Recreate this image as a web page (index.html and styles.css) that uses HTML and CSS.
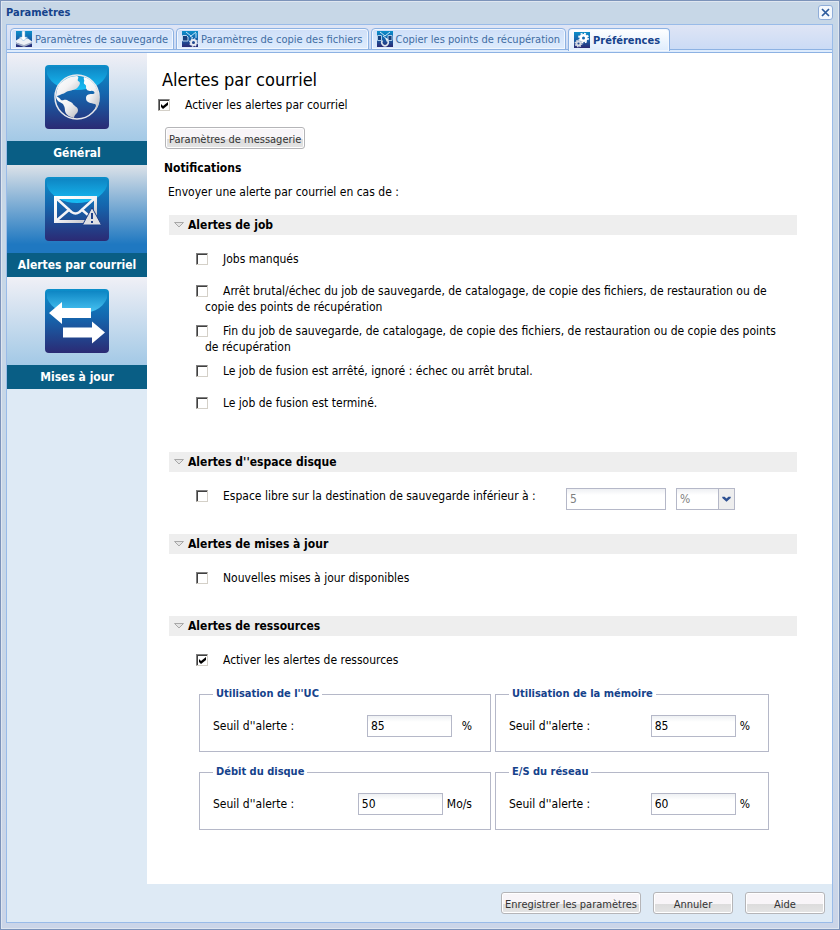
FILE: index.html
```html
<!DOCTYPE html>
<html lang="fr">
<head>
    <meta charset="UTF-8">
    <meta name="viewport" content="width=device-width, initial-scale=1.0">
    <title>Paramètres</title>
    <link rel="stylesheet" href="styles.css">
</head>
<body>

<!-- Shared gradients -->
<svg class="defs" width="0" height="0" aria-hidden="true">
    <defs>
        <linearGradient id="tile" x1="0" y1="0" x2="0" y2="1">
            <stop offset="0" stop-color="#0c8fca"/>
            <stop offset="0.45" stop-color="#1565ad"/>
            <stop offset="1" stop-color="#2b2a74"/>
        </linearGradient>
        <linearGradient id="gloss" x1="0" y1="0" x2="0" y2="1">
            <stop offset="0" stop-color="#0e86c4"/>
            <stop offset="1" stop-color="#18bdf5"/>
        </linearGradient>
        <linearGradient id="glossLight" x1="0" y1="0" x2="0" y2="1">
            <stop offset="0" stop-color="#0e86c4"/>
            <stop offset="1" stop-color="#4cc8f6"/>
        </linearGradient>
        <linearGradient id="metal" x1="0" y1="0" x2="1" y2="1">
            <stop offset="0" stop-color="#ffffff"/>
            <stop offset="0.5" stop-color="#f2f2f4"/>
            <stop offset="1" stop-color="#b9bac0"/>
        </linearGradient>
    </defs>
</svg>

<div class="window">
    <header class="titlebar">
        <span>Paramètres</span>
        <button class="close" type="button" aria-label="Fermer">
            <svg width="9" height="9" viewBox="0 0 9 9"><path d="M1 1l7 7M8 1l-7 7" stroke="#2c5a9c" stroke-width="1.7"/></svg>
        </button>
    </header>

    <div class="panel">
        <nav class="tabs">
            <button class="tab" type="button">
                <svg width="16" height="16" viewBox="0 0 16 16">
                    <rect width="16" height="16" fill="url(#tile)"/>
                    <path d="M0 9.500L4 7l8 .5 4 3v1.500L8 15 0 11.500z" fill="#eef1f6"/>
                    <path d="M0 11.500l8 2.500 8-3v1.500L8 16l-8-3z" fill="#a3aec6"/>
                    <path d="M6 0h3v6h2.500L7.500 10 3.500 6H6z" fill="#fff" stroke="#6fa6d6" stroke-width=".5"/>
                </svg>
                Paramètres de sauvegarde
            </button>
            <button class="tab" type="button">
                <svg width="16" height="16" viewBox="0 0 16 16">
                    <rect width="16" height="16" fill="url(#tile)"/>
                    <path d="M.5 4.500h4L6 6v4H.5z" fill="#173f7c" stroke="#b9d4ee"/>
                    <path d="M4 1l5 4 5-4M8 5l3 2M14 2v5" fill="none" stroke="#bfe4f8"/>
                    <circle cx="11.500" cy="11.500" r="2.500" fill="none" stroke="#e8ebf2" stroke-width="2"/>
                    <circle cx="11.500" cy="11.500" r="3.800" fill="none" stroke="#e8ebf2" stroke-width="1.200" stroke-dasharray="1.500 1.480"/>
                </svg>
                Paramètres de copie des fichiers
            </button>
            <button class="tab" type="button">
                <svg width="16" height="16" viewBox="0 0 16 16">
                    <rect width="16" height="16" fill="url(#tile)"/>
                    <path d="M.5 4.500h4v5h-4zM15 4.500h-4v5h4z" fill="#173f7c" stroke="#a9cbea"/>
                    <path d="M3 1l5 4 5-4M6 5l4 3" fill="none" stroke="#c9e9fa"/>
                    <path d="M5.500 9.500a3.200 3.200 0 1 0 5 0" fill="none" stroke="#dfe5ee" stroke-width="1.600"/>
                    <path d="M8 7l3.500 1-1.500 3z" fill="#eef1f6"/>
                </svg>
                Copier les points de récupération
            </button>
            <button class="tab active" type="button">
                <svg width="16" height="16" viewBox="0 0 16 16">
                    <rect width="16" height="16" fill="url(#tile)"/>
                    <circle cx="9.500" cy="6" r="2.800" fill="none" stroke="#fff" stroke-width="2.600"/>
                    <circle cx="9.500" cy="6" r="4.600" fill="none" stroke="#fff" stroke-width="1.600" stroke-dasharray="2 1.613"/>
                    <circle cx="4.500" cy="11.500" r="2" fill="none" stroke="#d5d9e2" stroke-width="1.900"/>
                    <circle cx="4.500" cy="11.500" r="3.300" fill="none" stroke="#d5d9e2" stroke-width="1.300" stroke-dasharray="1.400 1.190"/>
                </svg>
                Préférences
            </button>
        </nav>

        <div class="content">
            <aside class="sidebar">
                <button class="side-item" type="button">
                    <span class="side-icon">
                        <svg width="64" height="64" viewBox="0 0 64 64">
                            <rect width="64" height="64" rx="4" fill="url(#tile)"/>
                            <path d="M2 4q0-2 2-2h56q2 0 2 2v5C58 20 45 25 32 25S6 20 2 9z" fill="url(#gloss)"/>
                            <circle cx="32" cy="32" r="22" fill="none" stroke="#e6e7ec" stroke-width="1.500"/>
                            <path d="M11 32c0-6 2-12 6-15 4-4 9-6 15-6 3 1 0 3 1 5 3 1 2 4 0 6-2 3-6 3-9 4-3 0-4 3-7 3-1 1-4 1-6 3z" fill="url(#metal)"/>
                            <path d="M11 31c2 1 4 2 5 4 3 1 2-1 6 0 2 2 4 1 6 4 1 2 5 3 5 6 0 4-4 4-4 8-4-1-8-3-9-7 0-4-1-5-2-7-3-2-7-3-7-8z" fill="url(#metal)"/>
                            <path d="M39 12c-1 2 1 3 0 5-1 3 3 2 2 5 0 3 2 4 5 4 3-1 5 3 2 3-3 0-7 0-7 4 0 5 5 5 9 6 2 1 0 4 1 6 3-4 4-9 3-14-1-8-6-16-15-19z" fill="url(#metal)"/>
                        </svg>
                    </span>
                    <span class="side-label">Général</span>
                </button>
                <button class="side-item selected" type="button">
                    <span class="side-icon">
                        <svg width="64" height="64" viewBox="0 0 64 64">
                            <rect width="64" height="64" rx="4" fill="url(#tile)"/>
                            <path d="M2 4q0-2 2-2h56q2 0 2 2v5C58 20 45 26 32 26S6 20 2 9z" fill="url(#gloss)"/>
                            <path d="M10.500 20.500h40v24h-40z" fill="none" stroke="url(#metal)" stroke-width="3"/>
                            <path d="M11 21l15.500 14q4 3 8 0L50 21M11 44l14-12M50 44L36 32" fill="none" stroke="#f4f4f7" stroke-width="2.500"/>
                            <path d="M47 30.500L56.500 48h-19z" fill="#dedfe3" stroke="#1d3f88"/>
                            <path d="M46 36h2v6h-2zM46 44h2v2h-2z" fill="#1d3f88"/>
                        </svg>
                    </span>
                    <span class="side-label">Alertes par courriel</span>
                </button>
                <button class="side-item" type="button">
                    <span class="side-icon">
                        <svg width="64" height="64" viewBox="0 0 64 64">
                            <rect width="64" height="64" rx="4" fill="url(#tile)"/>
                            <path d="M2 4q0-2 2-2h56q2 0 2 2v5C58 20 45 25 32 25S6 20 2 9z" fill="url(#glossLight)"/>
                            <path d="M4 24l13-11v6h29v10H17v6zM60 43.500L47 32.500v6H18v10h29v6z" fill="#fff"/>
                        </svg>
                    </span>
                    <span class="side-label">Mises à jour</span>
                </button>
            </aside>

            <main class="main">
                <h1>Alertes par courriel</h1>
                <div class="check-row enable">
                    <input type="checkbox" id="enableMail" checked><label for="enableMail">Activer les alertes par courriel</label>
                </div>
                <button class="btn mail-btn" type="button">Paramètres de messagerie</button>
                <h2>Notifications</h2>
                <p class="intro">Envoyer une alerte par courriel en cas de :</p>

                <section class="group jobs">
                    <h3><svg width="10" height="6" viewBox="0 0 10 6"><path d="M.5.500h9L5 5z" fill="#e4e4e4" stroke="#a8a8a8"/></svg>Alertes de job</h3>
                    <div class="rows">
                        <div class="check-row"><input type="checkbox" id="missed"><label for="missed">Jobs manqués</label></div>
                        <div class="check-row"><input type="checkbox" id="failed"><label for="failed">Arrêt brutal/échec du job de sauvegarde, de catalogage, de copie des fichiers, de restauration ou de copie des points de récupération</label></div>
                        <div class="check-row"><input type="checkbox" id="finished"><label for="finished">Fin du job de sauvegarde, de catalogage, de copie des fichiers, de restauration ou de copie des points de récupération</label></div>
                        <div class="check-row"><input type="checkbox" id="mergeStopped"><label for="mergeStopped">Le job de fusion est arrêté, ignoré : échec ou arrêt brutal.</label></div>
                        <div class="check-row"><input type="checkbox" id="mergeDone"><label for="mergeDone">Le job de fusion est terminé.</label></div>
                    </div>
                </section>

                <section class="group">
                    <h3><svg width="10" height="6" viewBox="0 0 10 6"><path d="M.5.500h9L5 5z" fill="#e4e4e4" stroke="#a8a8a8"/></svg>Alertes d''espace disque</h3>
                    <div class="rows space-row">
                        <div class="check-row"><input type="checkbox" id="space"><label for="space">Espace libre sur la destination de sauvegarde inférieur à :</label></div>
                        <input class="field space-value" type="text" value="5" aria-label="Espace libre" disabled>
                        <span class="combo">
                            <select aria-label="Unité" disabled>
                                <option>%</option>
                            </select>
                            <svg width="16" height="20" viewBox="0 0 16 20"><path d="M3.500 7.500h2.500l2 2 2-2h2.500v1.500L8 13 3.500 9z" fill="#2f5192"/></svg>
                        </span>
                    </div>
                </section>

                <section class="group">
                    <h3><svg width="10" height="6" viewBox="0 0 10 6"><path d="M.5.500h9L5 5z" fill="#e4e4e4" stroke="#a8a8a8"/></svg>Alertes de mises à jour</h3>
                    <div class="rows">
                        <div class="check-row"><input type="checkbox" id="updates"><label for="updates">Nouvelles mises à jour disponibles</label></div>
                    </div>
                </section>

                <section class="group">
                    <h3><svg width="10" height="6" viewBox="0 0 10 6"><path d="M.5.500h9L5 5z" fill="#e4e4e4" stroke="#a8a8a8"/></svg>Alertes de ressources</h3>
                    <div class="rows">
                        <div class="check-row"><input type="checkbox" id="resources" checked><label for="resources">Activer les alertes de ressources</label></div>
                    </div>
                    <div class="thresholds">
                        <fieldset>
                            <legend>Utilisation de l''UC</legend>
                            <div class="threshold">
                                <label for="cpu">Seuil d''alerte :</label>
                                <input class="field" type="text" id="cpu" value="85">
                                <span class="unit wide">%</span>
                            </div>
                        </fieldset>
                        <fieldset>
                            <legend>Utilisation de la mémoire</legend>
                            <div class="threshold">
                                <label for="memory">Seuil d''alerte :</label>
                                <input class="field" type="text" id="memory" value="85">
                                <span class="unit">%</span>
                            </div>
                        </fieldset>
                        <fieldset>
                            <legend>Débit du disque</legend>
                            <div class="threshold">
                                <label for="disk">Seuil d''alerte :</label>
                                <input class="field" type="text" id="disk" value="50">
                                <span class="unit">Mo/s</span>
                            </div>
                        </fieldset>
                        <fieldset>
                            <legend>E/S du réseau</legend>
                            <div class="threshold">
                                <label for="network">Seuil d''alerte :</label>
                                <input class="field" type="text" id="network" value="60">
                                <span class="unit">%</span>
                            </div>
                        </fieldset>
                    </div>
                </section>
            </main>
        </div>

        <footer class="footer">
            <button class="btn" type="button">Enregistrer les paramètres</button>
            <button class="btn" type="button">Annuler</button>
            <button class="btn" type="button">Aide</button>
        </footer>
    </div>
</div>

</body>
</html>
```
FILE: styles.css
```css
* {
    box-sizing: border-box;
}
body {
    margin: 0;
    font-family: Tahoma, "DejaVu Sans Condensed", "DejaVu Sans", sans-serif;
    font-size: 12px;
    line-height: 16px;
    color: #000;
}
button, input, select {
    font-family: inherit;
    font-size: 12px;
}
button {
    padding: 0;
    border: none;
    background: none;
    cursor: pointer;
}
svg {
    flex: none;
    display: block;
}
.defs {
    position: absolute;
}
.window {
    display: flex;
    flex-direction: column;
    min-height: 100vh;
    padding: 0 6px 6px 5px;
    border: 1px solid #7c93ba;
    background: linear-gradient(#c7d7e7 60%, #cbd5e8);
    box-shadow: inset 0 0 0 1px #dfe6f0;
}
.titlebar {
    display: flex;
    justify-content: space-between;
    align-items: center;
    height: 23px;
    font-size: 11px;
    font-weight: bold;
    color: #15428b;
}
.close {
    display: flex;
    align-items: center;
    justify-content: center;
    width: 15px;
    height: 15px;
    border: 1px solid #8fadd9;
    border-radius: 3px;
    background: #f4f8fd;
}
.panel {
    flex: 1;
    display: flex;
    flex-direction: column;
    border: 1px solid #99bbe8;
}
.tabs {
    display: flex;
    align-items: flex-end;
    gap: 2px;
    height: 28px;
    padding: 0 3px;
    border-bottom: 1px solid #8db2e3;
    background: linear-gradient(#dfe5f5, #cbdbf5 24px, #8db2e3 24px, #8db2e3 25px, #deecfd 25px);
}
.tab {
    display: flex;
    align-items: center;
    gap: 3px;
    height: 22px;
    margin-bottom: 2px;
    padding: 0 5px;
    border: 1px solid #8db2e3;
    border-radius: 4px 4px 0 0;
    background: linear-gradient(#cfdff8, #deecfd);
    box-shadow: inset 0 0 0 1px #f2f7fe;
    font-size: 11px;
    color: #416da3;
    white-space: nowrap;
}
.tab.active {
    height: 23px;
    margin-bottom: 1px;
    padding-right: 9px;
    border-bottom: none;
    background: linear-gradient(#fff, #deecfd);
    font-weight: bold;
    color: #15428b;
}
.content {
    flex: 1;
    display: flex;
}
.sidebar {
    flex: none;
    width: 140px;
    background: #deeaf5;
}
.side-item {
    display: block;
    width: 100%;
}
.side-icon {
    display: flex;
    justify-content: center;
    padding: 12px 0;
    background: linear-gradient(#f0f0f6, #a3c9e6);
}
.side-item.selected .side-icon {
    background: linear-gradient(#dce2e8, #1f78c1 90%);
}
.side-label {
    display: block;
    background: #095e85;
    font-size: 12px;
    font-weight: bold;
    line-height: 24px;
    color: #fff;
}
.main {
    flex: 1;
    padding: 16px 35px 16px 11px;
    background: #fff;
}
h1 {
    margin: 0 0 0 4px;
    font-size: 18px;
    font-weight: normal;
    line-height: 22px;
}
input[type="checkbox"] {
    appearance: none;
    width: 12px;
    height: 12px;
    margin: 0 15px 0 0;
    border: 1px solid;
    border-color: #808080 #d4d0c8 #d4d0c8 #808080;
    background: #fff;
    box-shadow: inset 1px 1px #404040;
    vertical-align: -2px;
}
input[type="checkbox"]:checked {
    background: #fff url("data:image/svg+xml,%3Csvg xmlns='http://www.w3.org/2000/svg' viewBox='0 0 10 10'%3E%3Cpath d='M2 4l2 2 5-4v3L4 9 2 7z'/%3E%3C/svg%3E") center / 10px 10px no-repeat;
}
.check-row {
    min-height: 24px;
    padding-left: 9px;
    text-indent: -9px;
}
.enable {
    margin-top: 6px;
}
.btn {
    min-width: 80px;
    height: 22px;
    padding: 2px 3px 0;
    border: 1px solid #b5b5b8;
    border-radius: 3px;
    background: linear-gradient(#f8f5f8 55%, #dcdcdc 55%, #e4e4e4);
    box-shadow: inset 0 0 0 1px #fff;
    font-size: 11px;
    color: #333;
}
.mail-btn {
    display: block;
    margin: 6px 0 0 7px;
}
h2 {
    margin: 11px 0 0 6px;
    font-size: 12px;
}
.intro {
    margin: 8px 0 15px 10px;
}
.group {
    margin-left: 11px;
    padding-bottom: 22px;
}
.jobs {
    padding-bottom: 33px;
}
h3 {
    display: flex;
    align-items: center;
    gap: 4px;
    margin: 0;
    padding-left: 5px;
    background: #eee;
    font-size: 12px;
    line-height: 20px;
}
.rows {
    display: flex;
    flex-direction: column;
    gap: 8px;
    padding: 16px 8px 0 27px;
}
.space-row {
    flex-direction: row;
    gap: 0;
}
.space-row .check-row {
    width: 370px;
}
.field {
    width: 85px;
    height: 22px;
    padding: 0 3px;
    border: 1px solid #b5b8c8;
    border-radius: 0;
    background: linear-gradient(#eef0f3, #fff 6px);
    color: #000;
}
.field:disabled {
    color: #7f7f7f;
}
.space-value {
    width: 100px;
    margin-right: 10px;
}
.combo {
    position: relative;
    width: 59px;
}
.combo select {
    appearance: none;
    width: 100%;
    height: 22px;
    padding: 0 18px 0 3px;
    border: 1px solid #b5b8c8;
    border-radius: 0;
    background: linear-gradient(#eef0f3, #fff 6px);
    color: #7f7f7f;
    opacity: 1;
}
.combo svg {
    position: absolute;
    top: 1px;
    right: 1px;
    border-left: 1px solid #b5b8c8;
    background: #eee;
    pointer-events: none;
}
.thresholds {
    display: grid;
    grid-template-columns: 292fr 274fr;
    gap: 13px 4px;
    padding: 11px 28px 0 30px;
}
fieldset {
    min-width: 0;
    height: 65px;
    margin: 0;
    padding: 14px 18px 0 13px;
    border: 1px solid #b5b8c8;
}
legend {
    padding: 0 3px;
    font-size: 11px;
    font-weight: bold;
    line-height: 14px;
    color: #15428b;
}
.threshold {
    display: flex;
    align-items: center;
}
.threshold label {
    flex: 1;
}
.unit {
    margin-left: 4px;
}
.unit.wide {
    width: 16px;
    text-align: right;
}
.footer {
    display: flex;
    justify-content: flex-end;
    gap: 12px;
    padding: 8px 7px;
    background: #deeaf5;
}
```
